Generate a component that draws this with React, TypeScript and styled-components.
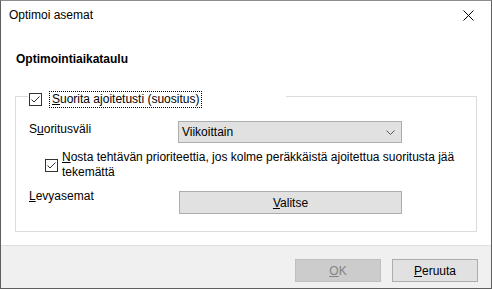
import styled, { createGlobalStyle } from "styled-components";

const Global = createGlobalStyle`
  html, body { margin: 0; padding: 0; background: #fff; }
  body { font-family: "Liberation Sans", Arial, sans-serif; font-size: 12px; color: #000; }
`;

const Window = styled.div`
  width: 492px;
  height: 289px;
  box-sizing: border-box;
  border: 1px solid #5f5f5f;
  border-top-color: #8c8c8c;
  background: #fff;
  display: flex;
  flex-direction: column;
`;

const TitleBar = styled.div`
  height: 29px;
  display: flex;
  align-items: center;
  justify-content: space-between;
  padding-left: 8px;
  line-height: 15px;
`;

const CloseButton = styled.div`
  width: 46px;
  height: 29px;
  display: flex;
  align-items: center;
  justify-content: center;
`;

const Body = styled.div`
  flex: 1;
  padding: 22px 14px 0;
  display: flex;
  flex-direction: column;
`;

const Heading = styled.div`
  font-weight: bold;
  line-height: 15px;
  padding-left: 1px;
`;

const Group = styled.fieldset`
  margin: 24px 0 0;
  padding: 0 12px 0 13px;
  border: 1px solid #dcdcdc;
  height: 141px;
  box-sizing: border-box;
  min-width: 0;
`;

const Legend = styled.legend`
  margin-left: -1px;
  padding: 0;
  width: 258px;
  height: 10px;
  line-height: 15px;
`;

const LegendInner = styled.div`
  display: flex;
  align-items: center;
  height: 16px;
  padding-left: 1px;
  gap: 8px;
`;

const Focus = styled.span`
  outline: 1px dotted #000;
  outline-offset: 0;
  padding: 0 2px;
  line-height: 15px;
`;

const Row = styled.div<{ $top: number }>`
  display: grid;
  grid-template-columns: 149px 224px;
  align-items: start;
  margin-top: ${(p) => p.$top}px;
`;

const RowLabel = styled.div<{ $pad: number }>`
  line-height: 15px;
  padding-top: ${(p) => p.$pad}px;
`;

const Select = styled.div`
  height: 22px;
  box-sizing: border-box;
  border: 1px solid #adadad;
  background: #e1e1e1;
  display: flex;
  align-items: center;
  justify-content: space-between;
  padding: 0 6px 0 3px;
`;

const CheckRow = styled.div`
  display: flex;
  align-items: center;
  gap: 4px;
  margin-top: 7px;
  margin-left: 16px;
`;

const CheckText = styled.div`
  line-height: 15px;
  flex: 1;
`;

const Button = styled.div<{ $disabled?: boolean }>`
  height: 23px;
  box-sizing: border-box;
  border: 1px solid ${(p) => (p.$disabled ? "#bfbfbf" : "#adadad")};
  background: ${(p) => (p.$disabled ? "#cccccc" : "#e1e1e1")};
  color: ${(p) => (p.$disabled ? "#838383" : "#000")};
  display: flex;
  align-items: center;
  justify-content: center;
`;

const WideButton = styled(Button)`
  width: 223px;
  margin-top: 2px;
  margin-left: 1px;
`;

const Footer = styled.div`
  height: 43px;
  box-sizing: border-box;
  border-top: 1px solid #dfdfdf;
  background: #f0f0f0;
  display: flex;
  justify-content: flex-end;
  gap: 11px;
  padding: 13px 13px 0 0;
`;

const FooterButton = styled(Button)`
  width: 86px;
`;

const U = styled.span`
  text-decoration: underline;
  text-underline-offset: 1px;
`;

function Check() {
  return (
    <svg width="13" height="13" viewBox="0 0 13 13" style={{ flexShrink: 0 }}>
      <rect x="0.5" y="0.5" width="12" height="12" fill="#fff" stroke="#333" />
      <path d="M2.5 6.5 L5 9 L10.5 3.5" fill="none" stroke="#333" strokeWidth="1" />
    </svg>
  );
}

export default function App() {
  return (
    <>
      <Global />
      <Window>
        <TitleBar>
          <span>Optimoi asemat</span>
          <CloseButton>
            <svg width="11" height="11" viewBox="0 0 11 11">
              <path d="M0.5 0.5 L10.5 10.5 M10.5 0.5 L0.5 10.5" stroke="#000" strokeWidth="1" />
            </svg>
          </CloseButton>
        </TitleBar>
        <Body>
          <Heading>Optimointiaikataulu</Heading>
          <Group>
            <Legend>
              <LegendInner>
                <Check />
                <Focus>
                  <U>S</U>uorita ajoitetusti (suositus)
                </Focus>
              </LegendInner>
            </Legend>
            <Row $top={20}>
              <RowLabel $pad={1}>
                S<U>u</U>oritusväli
              </RowLabel>
              <Select>
                <span>Viikoittain</span>
                <svg width="9" height="5" viewBox="0 0 9 5">
                  <path d="M0.5 0.5 L4.5 4.5 L8.5 0.5" fill="none" stroke="#555" strokeWidth="1" />
                </svg>
              </Select>
            </Row>
            <CheckRow>
              <Check />
              <CheckText>
                <U>N</U>osta tehtävän prioriteettia, jos kolme peräkkäistä ajoitettua suoritusta jää tekemättä
              </CheckText>
            </CheckRow>
            <Row $top={9}>
              <RowLabel $pad={0}>
                <U>L</U>evyasemat
              </RowLabel>
              <WideButton>
                <span>
                  <U>V</U>alitse
                </span>
              </WideButton>
            </Row>
          </Group>
        </Body>
        <Footer>
          <FooterButton $disabled>
            <span>
              <U>O</U>K
            </span>
          </FooterButton>
          <FooterButton>
            <span>
              <U>P</U>eruuta
            </span>
          </FooterButton>
        </Footer>
      </Window>
    </>
  );
}
